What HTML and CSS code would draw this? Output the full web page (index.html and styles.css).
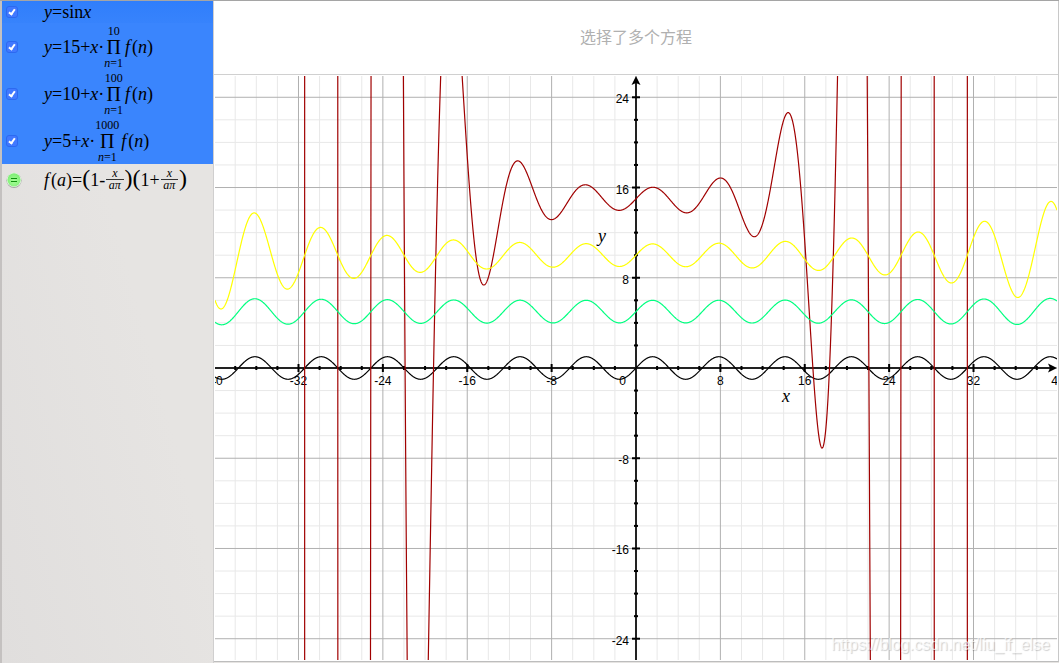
FILE: index.html
```
<!DOCTYPE html>
<html lang="zh-CN">
<head>
    <meta charset="UTF-8">
    <meta name="viewport" content="width=device-width, initial-scale=1.0">
    <title>Grapher</title>
    <link rel="stylesheet" href="styles.css">
</head>
<body>
    <div class="window">
        <aside class="sidebar">
            <ul class="equations">
                <li class="equation selected short">
                    <input type="checkbox" id="eq1" class="check" checked>
                    <label for="eq1" class="math"><i>y</i>=sin<i>x</i></label>
                </li>
                <li class="equation selected">
                    <input type="checkbox" id="eq2" class="check" checked>
                    <label for="eq2" class="math"><i>y</i>=15+<i>x</i>·<span class="product"><span class="limit">10</span><span class="pi">Π</span><span class="limit"><i>n</i>=1</span></span><i class="func">f</i>(<i>n</i>)</label>
                </li>
                <li class="equation selected">
                    <input type="checkbox" id="eq3" class="check" checked>
                    <label for="eq3" class="math"><i>y</i>=10+<i>x</i>·<span class="product"><span class="limit">100</span><span class="pi">Π</span><span class="limit"><i>n</i>=1</span></span><i class="func">f</i>(<i>n</i>)</label>
                </li>
                <li class="equation selected">
                    <input type="checkbox" id="eq4" class="check" checked>
                    <label for="eq4" class="math"><i>y</i>=5+<i>x</i>·<span class="product"><span class="limit">1000</span><span class="pi">Π</span><span class="limit"><i>n</i>=1</span></span><i class="func">f</i>(<i>n</i>)</label>
                </li>
                <li class="equation definition">
                    <svg class="badge" width="16" height="16" viewBox="0 0 16 16">
                        <defs>
                            <radialGradient id="green" cx="50%" cy="60%" r="55%">
                                <stop offset="0" stop-color="#a8ff98"/>
                                <stop offset="1" stop-color="#7fee76"/>
                            </radialGradient>
                        </defs>
                        <circle cx="8" cy="8.3" r="7.6" fill="#a3a8a1"/>
                        <circle cx="8" cy="7.8" r="7.3" fill="#e9f6e6"/>
                        <circle cx="8" cy="7.8" r="6.6" fill="url(#green)"/>
                        <path d="M5 6.5h6M5 9.5h6" stroke="#0f8f0f" stroke-width="1.2"/>
                    </svg>
                    <span class="math"><i class="func">f</i>(<i>a</i>)=<span class="fence">(</span>1-<span class="fraction"><i class="top">x</i><i>aπ</i></span><span class="fence">)</span><span class="fence">(</span>1+<span class="fraction"><i class="top">x</i><i>aπ</i></span><span class="fence">)</span></span>
                </li>
            </ul>
        </aside>
        <main class="main">
            <header class="editor">选择了多个方程</header>
            <div class="graph">
                <svg id="plot" class="plot"></svg>
                <div class="watermark">https://blog.csdn.net/liu_if_else</div>
            </div>
        </main>
    </div>
    <script src="script.js"></script>
</body>
</html>
```
FILE: styles.css
```
* {
    box-sizing: border-box;
}

body {
    margin: 0;
    background-color: #e6e4e2;
    font-family: "Liberation Sans", "Noto Sans CJK SC", Arial, sans-serif;
}

.window {
    display: flex;
    height: 100vh;
    border-top: 1px solid #a5a5a5;
}

.sidebar {
    flex: 0 0 214px;
    border-left: 2px solid #c4c1c0;
    border-right: 1px solid #d0cfcf;
    background: linear-gradient(75deg, #e0dedd, #e6e4e2 60%);
}

.equations {
    list-style: none;
    margin: 0;
    padding: 0;
}

.equation {
    display: flex;
    align-items: center;
    height: 47px;
    padding-left: 4px;
}

.equation.short {
    height: 22px;
}

.selected {
    background-color: #3a85fd;
}

.selected.short {
    background: linear-gradient(#307efb, #3783fc);
}

.definition {
    height: 31px;
}

.check {
    appearance: none;
    flex: none;
    display: flex;
    justify-content: center;
    width: 12px;
    height: 12px;
    margin: 0 26px 0 0;
    padding-top: 1px;
    border: 1px solid #2c69f0;
    border-radius: 3px;
    background-color: #4179ff;
}

.check:checked::after {
    content: "";
    width: 4px;
    height: 7px;
    border: solid #fff;
    border-width: 0 2px 2px 0;
    box-sizing: border-box;
    transform: rotate(35deg);
}

.badge {
    flex: none;
    margin-right: 22px;
}

.math {
    display: flex;
    align-items: center;
    font-family: "Liberation Serif", "Times New Roman", serif;
    font-size: 18px;
    line-height: 20px;
    color: #000;
    white-space: nowrap;
}

.product {
    display: flex;
    flex-direction: column;
    align-items: center;
    margin-right: 2px;
}

.pi {
    font-size: 20px;
    line-height: 20px;
}

.limit {
    font-size: 12px;
    line-height: 12px;
}

.func {
    padding-right: 2px;
}

.fence {
    font-size: 24px;
    line-height: 24px;
    padding-bottom: 4px;
}

.fraction {
    display: flex;
    flex-direction: column;
    align-items: center;
    margin: 0 1px;
    font-size: 12px;
    line-height: 11px;
}

.top {
    align-self: stretch;
    border-bottom: 1px solid #333;
    padding: 0 6px;
}

.main {
    flex: 1;
    display: flex;
    flex-direction: column;
    min-width: 0;
    margin-bottom: 1px;
    border-right: 1px solid #c8c8c8;
    border-bottom: 1px solid #bdbdbd;
    background-color: #fff;
}

.editor {
    flex: 0 0 74px;
    display: flex;
    align-items: center;
    justify-content: center;
    padding-bottom: 3px;
    border-bottom: 1px solid #d0d0d0;
    color: #b0b0b0;
    font-size: 16px;
}

.graph {
    position: relative;
    flex: 1;
    min-height: 0;
    padding: 1px;
}

.plot {
    display: block;
    width: 100%;
    height: 100%;
    overflow: hidden;
}

.plot .minor {
    stroke: #e8e8e8;
}

.plot .major {
    stroke: #b0b0b0;
}

.plot .axis {
    stroke: #222;
    stroke-width: 2;
}

.plot .tick {
    stroke: #000;
    stroke-width: 2;
}

.plot .number {
    font-size: 12px;
    fill: #000;
}

.plot .name {
    font-family: "Liberation Serif", "Times New Roman", serif;
    font-size: 18px;
    font-style: italic;
}

.plot .curve {
    fill: none;
    stroke-width: 1.2;
}

.watermark {
    position: absolute;
    right: 8px;
    bottom: 6px;
    font-size: 16px;
    line-height: 20px;
    color: rgba(255, 255, 255, 0.7);
    text-shadow: 1px 1px 1px rgba(0, 0, 0, 0.2);
}
```
FILE: script.js
```
const svg = document.getElementById('plot');
const UNIT_X = 10.547;
const UNIT_Y = 11.28;

function add(name, attrs, text) {
    const el = document.createElementNS('http://www.w3.org/2000/svg', name);
    for (const key in attrs) {
        el.setAttribute(key, attrs[key]);
    }
    if (text !== undefined) {
        el.textContent = text;
    }
    svg.appendChild(el);
}

function line(cls, x1, y1, x2, y2) {
    add('line', { class: cls, x1: x1, y1: y1, x2: x2, y2: y2 });
}

// x * f(1) * f(2) * ... * f(count)
function product(x, count) {
    let p = x;
    for (let n = 1; n <= count; n++) {
        const a = n * Math.PI;
        p *= (1 - x / a) * (1 + x / a);
    }
    return p;
}

function draw() {
    svg.innerHTML = '';
    const w = svg.clientWidth;
    const h = svg.clientHeight;
    const cx = w / 2;
    const cy = h / 2;
    const maxX = Math.ceil(w / 2 / UNIT_X / 8) * 8;
    const maxY = Math.ceil(h / 2 / UNIT_Y / 8) * 8;

    // grid, every 8 units is a darker line
    for (const cls of ['minor', 'major']) {
        for (let i = -maxX; i <= maxX; i += 2) {
            if ((i % 8 === 0) === (cls === 'major') && Math.abs(i) * UNIT_X < cx) {
                line(cls, cx + i * UNIT_X, 0, cx + i * UNIT_X, h);
            }
        }
        for (let i = -maxY; i <= maxY; i += 2) {
            if ((i % 8 === 0) === (cls === 'major')) {
                line(cls, 0, cy - i * UNIT_Y, w, cy - i * UNIT_Y);
            }
        }
    }

    // axes
    line('axis', 0, cy, w - 6, cy);
    line('axis', cx, 6, cx, h);
    add('path', { d: `M${cx} 0l4.5 9l-4.5 -2l-4.5 2z` });
    add('path', { d: `M${w} ${cy}l-9 4.5l2 -4.5l-2 -4.5z` });

    for (let i = -maxX; i <= maxX; i += 2) {
        const x = cx + i * UNIT_X;
        const size = i % 8 === 0 ? 4 : 2;
        if (i !== 0 && Math.abs(i) * UNIT_X < cx) {
            line('tick', x, cy - size, x, cy + size);
        }
        if (i % 8 === 0 && i !== 0) {
            add('text', { class: 'number', x: x, y: cy + 17, 'text-anchor': 'middle' }, i);
        }
    }
    for (let i = -maxY; i <= maxY; i += 2) {
        const y = cy - i * UNIT_Y;
        const size = i % 8 === 0 ? 4 : 2;
        if (i !== 0) {
            line('tick', cx - size, y, cx + size, y);
        }
        // numbers past the top or bottom edge are left out
        if (i % 8 === 0 && i !== 0 && Math.abs(i) * UNIT_Y < cy) {
            add('text', { class: 'number', x: cx - 7, y: y + 6, 'text-anchor': 'end' }, i);
        }
    }
    add('text', { class: 'number', x: cx - 10, y: cy + 17, 'text-anchor': 'end' }, 0);
    add('text', { class: 'name', x: cx - 38, y: cy - 126 }, 'y');
    add('text', { class: 'name', x: cx + 146, y: cy + 34 }, 'x');

    // curves
    const curves = [
        { color: '#000', f: x => Math.sin(x) },
        { color: '#a00000', f: x => 15 + product(x, 10) },
        { color: '#ffff00', f: x => 10 + product(x, 100) },
        { color: '#00ff80', f: x => 5 + product(x, 1000) }
    ];
    for (const curve of curves) {
        const points = [];
        for (let px = 0; px <= w; px += 0.25) {
            const y = cy - curve.f((px - cx) / UNIT_X) * UNIT_Y;
            points.push(px + ',' + Math.max(-50000, Math.min(50000, y)).toFixed(2));
        }
        add('polyline', { class: 'curve', stroke: curve.color, points: points.join(' ') });
    }
}

draw();
window.addEventListener('resize', draw);
```
